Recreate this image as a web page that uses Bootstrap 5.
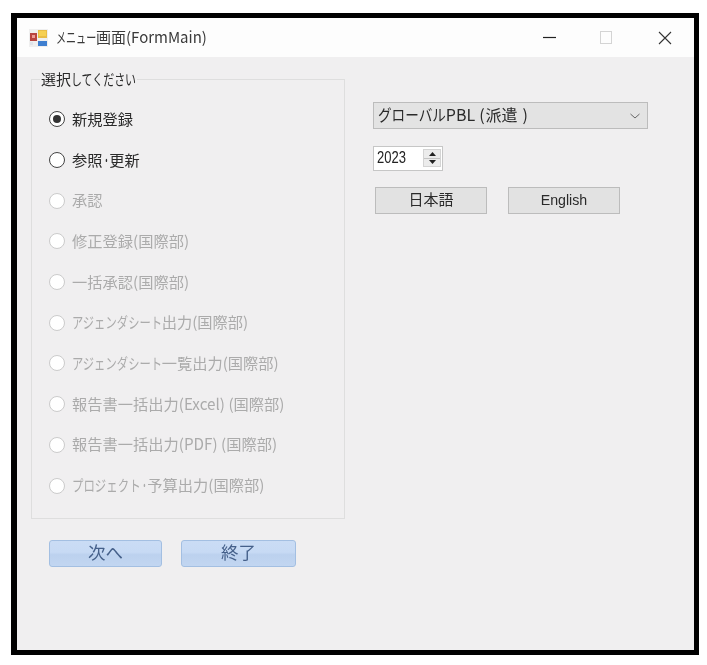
<!DOCTYPE html>
<html lang="ja">
<head>
<meta charset="utf-8">
<title>メニュー画面(FormMain)</title>
<link rel="stylesheet" href="https://cdn.jsdelivr.net/npm/bootstrap@5.3.0/dist/css/bootstrap.min.css">
<style>
html,body{height:100%;background:#fff;overflow:hidden}
body{font-family:"Noto Sans CJK JP","Liberation Sans",sans-serif;font-size:15px;color:#1c1c1c;padding:13px 8px 10px 11px}
.win-frame{height:642px;width:688px;border:solid #000;border-width:5px 5px 5px 6px;background:#f0eff0;filter:blur(.4px)}
.win-title{height:39px;background:#fdfdfd;padding:0 0 0 12px;flex:none}
.win-name{font-size:15px;margin-left:8px;color:#3a3a3a;white-space:nowrap}
.nar{display:inline-block;transform-origin:left center}
.tk{transform:scaleX(.67);margin-right:-20px}
.win-ctrls{margin-left:auto;padding-right:22px}
.ctl-min{margin-right:43px}
.ctl-max{margin-right:45px}
.win-body{padding:22px 0 0 14px}
.left-col{width:314px;flex:none}
.grp{border:1px solid #dedede;height:440px;padding:19px 0 0 17px;position:relative}
.grp-label{position:absolute;left:8px;top:-11px;background:#f0eff0;padding:0 1px;font-size:15px;line-height:20px;color:#2a2a2a;white-space:nowrap}
.gk{transform:scaleX(.73);margin-right:-24px}
.opt{height:40.7px;margin:0;padding:0;min-height:0;gap:7px;display:flex;align-items:center;font-size:15.25px;white-space:nowrap}
.opt .form-check-input{float:none;margin:0;width:16px;height:16px;background-color:#fff;border:1.5px solid #444;flex:none}
.opt .form-check-input:checked{background-color:#fff;border-color:#444;background-image:url("data:image/svg+xml,%3csvg xmlns='http://www.w3.org/2000/svg' viewBox='-4 -4 8 8'%3e%3ccircle r='2.3' fill='%23333'/%3e%3c/svg%3e");box-shadow:none}
.opt .form-check-input:disabled{opacity:1;border-color:#cbcbcb;border-width:1.5px}
.opt .form-check-label{opacity:1!important;color:#2a2a2a;padding-bottom:2px}
.opt input:disabled+.form-check-label{color:#ababab}
.ka{transform:scaleX(.74);margin-right:-32px}
.ka2{transform:scaleX(.75);margin-right:-23px}
.nak{transform:scaleX(.45);margin-right:-8.4px}
.btn-row{gap:19px;padding:21px 0 0 18px}
.blue-btn{height:27px;padding:0 0 3px;font-size:17.5px;line-height:1;color:#45608a;border:1px solid #a3bfe2;border-radius:3px;background:linear-gradient(#cadcf5,#c7daf4 45%,#bcd1ee 55%,#c2d6f1)}
.blue-btn:hover{color:#45608a;border-color:#a3bfe2}
.w113{width:113px}.w115{width:115px}
.right-col{padding:23px 0 0 28px}
.combo{display:block;width:275px;height:27px;border:1px solid #bcbcbc;border-radius:0;background:#e3e3e3 url("data:image/svg+xml,%3csvg xmlns='http://www.w3.org/2000/svg' width='12' height='8' viewBox='0 0 12 8'%3e%3cpath d='M1.5 2l4.5 4 4.5-4' fill='none' stroke='%23666'/%3e%3c/svg%3e") no-repeat right 6px center;padding:0 20px 3px 4px;font-size:16px;line-height:1;color:#2a2a2a;box-shadow:none;white-space:nowrap}
.combo:hover{background-color:#e3e3e3;border-color:#bcbcbc;color:#2a2a2a}
.ck{transform:scaleX(.85);margin-right:-12px}
.cp1{margin:0 1px 0 4px}
.cp2{margin-left:5px}
.spin{width:70px;height:25px;margin-top:17px;border:1px solid #c6c6c6;background:#fff}
.spin-val{font-family:"Liberation Sans",sans-serif;font-size:13px;padding-left:3px;flex:1;color:#222;line-height:21px}
.spin-val span{display:inline-block;transform:scaleY(1.25)}
.spin-arrows{width:18px;margin:2px 1px 3px 0;background:#ececec;border:1px solid #d4d4d4}
.spin-arrows svg{display:block;margin:auto}
.spin-half{flex:1}
.spin-half + .spin-half{border-top:1px solid #c4c4c4}
.gray-row{gap:21px;padding:16px 0 0 2px}
.gray-btn{width:112px;height:27px;padding:0 0 4px;border:1px solid #bcbcbc;border-radius:0;background:#e2e2e2;font-size:15px;line-height:1;color:#2a2a2a}
.gray-btn:hover{background:#e2e2e2;border-color:#bcbcbc;color:#2a2a2a}
.gray-btn.lat{font-family:"Liberation Sans",sans-serif;font-size:14.2px;padding-bottom:1px}
</style>
</head>
<body>
<div class="win-frame d-flex flex-column">
  <div class="win-title d-flex align-items-center">
    <svg width="19" height="18" viewBox="0 0 19 18"><rect x="0" y="0" width="19" height="18" fill="#efefef"/><rect x="1" y="4" width="7" height="8" fill="#b8443f"/><rect x="3" y="6" width="3" height="3" fill="#ee9a92"/><rect x="1" y="13" width="3" height="3" fill="#dfe3ea"/><rect x="9" y="1" width="9" height="8" fill="#e9bd45"/><rect x="10" y="2" width="7" height="5" fill="#f6d052"/><rect x="9" y="12" width="9" height="5" fill="#3f7fd0"/></svg>
    <span class="win-name"><span class="nar tk">メニュー</span>画面(FormMain)</span>
    <div class="win-ctrls d-flex align-items-center">
      <svg class="ctl-min" width="14" height="14" viewBox="0 0 14 14"><path d="M0 6.5h13" stroke="#222" stroke-width="1.2"/></svg>
      <svg class="ctl-max" width="13" height="14" viewBox="0 0 13 14"><rect x=".5" y=".5" width="11" height="12" fill="none" stroke="#d4d4d4"/></svg>
      <svg width="14" height="14" viewBox="0 0 14 14"><path d="M1 1l12 12M13 1L1 13" stroke="#333" stroke-width="1.1"/></svg>
    </div>
  </div>
  <div class="win-body d-flex flex-grow-1">
    <div class="left-col">
      <div class="grp">
        <div class="grp-label">選択<span class="nar gk">してください</span></div>
        <div class="form-check opt"><input class="form-check-input" type="radio" name="m" id="r1" checked><label class="form-check-label" for="r1">新規登録</label></div>
        <div class="form-check opt"><input class="form-check-input" type="radio" name="m" id="r2"><label class="form-check-label" for="r2">参照<span class="nar nak">・</span>更新</label></div>
        <div class="form-check opt"><input class="form-check-input" type="radio" name="m" id="r3" disabled><label class="form-check-label" for="r3">承認</label></div>
        <div class="form-check opt"><input class="form-check-input" type="radio" name="m" id="r4" disabled><label class="form-check-label" for="r4">修正登録(国際部)</label></div>
        <div class="form-check opt"><input class="form-check-input" type="radio" name="m" id="r5" disabled><label class="form-check-label" for="r5">一括承認(国際部)</label></div>
        <div class="form-check opt"><input class="form-check-input" type="radio" name="m" id="r6" disabled><label class="form-check-label" for="r6"><span class="nar ka">アジェンダシート</span>出力(国際部)</label></div>
        <div class="form-check opt"><input class="form-check-input" type="radio" name="m" id="r7" disabled><label class="form-check-label" for="r7"><span class="nar ka">アジェンダシート</span>一覧出力(国際部)</label></div>
        <div class="form-check opt"><input class="form-check-input" type="radio" name="m" id="r8" disabled><label class="form-check-label" for="r8">報告書一括出力(Excel) (国際部)</label></div>
        <div class="form-check opt"><input class="form-check-input" type="radio" name="m" id="r9" disabled><label class="form-check-label" for="r9">報告書一括出力(PDF) (国際部)</label></div>
        <div class="form-check opt"><input class="form-check-input" type="radio" name="m" id="r10" disabled><label class="form-check-label" for="r10"><span class="nar ka2">プロジェクト</span><span class="nar nak">・</span>予算出力(国際部)</label></div>
      </div>
      <div class="btn-row d-flex">
        <button type="button" class="btn blue-btn w113">次へ</button>
        <button type="button" class="btn blue-btn w115">終了</button>
      </div>
    </div>
    <div class="right-col">
      <button type="button" class="btn text-start combo"><span class="nar ck">グローバル</span>PBL<span class="cp1">(</span>派遣<span class="cp2">)</span></button>
      <div class="spin d-flex">
        <span class="spin-val"><span>2023</span></span>
        <span class="spin-arrows d-flex flex-column">
          <span class="spin-half d-flex align-items-center"><svg width="7" height="4" viewBox="0 0 7 4"><path d="M3.5 0L7 4H0z" fill="#222"/></svg></span>
          <span class="spin-half d-flex align-items-center"><svg width="7" height="4" viewBox="0 0 7 4"><path d="M3.5 4L0 0h7z" fill="#222"/></svg></span>
        </span>
      </div>
      <div class="gray-row d-flex">
        <button type="button" class="btn gray-btn">日本語</button>
        <button type="button" class="btn gray-btn lat">English</button>
      </div>
    </div>
  </div>
</div>
<script src="https://cdn.jsdelivr.net/npm/bootstrap@5.3.0/dist/js/bootstrap.bundle.min.js"></script>
</body>
</html>
